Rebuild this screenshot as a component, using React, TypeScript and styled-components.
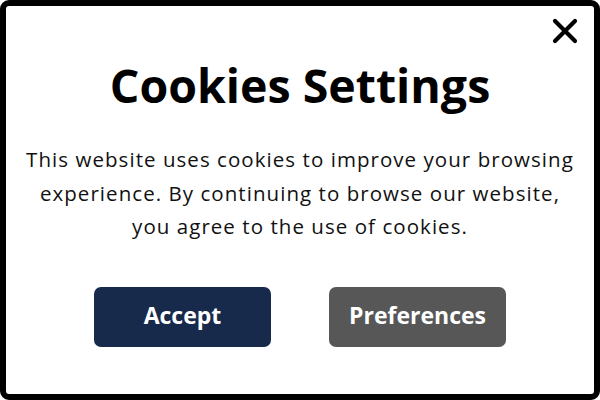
import styled, { createGlobalStyle } from "styled-components";

const GlobalStyle = createGlobalStyle`
  html, body {
    margin: 0;
    padding: 0;
    background: #ffffff;
  }
`;

const CloseIcon = () => (
  <svg width="26" height="26" viewBox="0 0 26 26" aria-hidden="true">
    <path
      d="M3 3 L23 23 M23 3 L3 23"
      stroke="#000"
      strokeWidth="4.2"
      strokeLinecap="round"
    />
  </svg>
);

const App = () => {
  return (
    <>
      <GlobalStyle />
      <Modal>
        <CloseButton aria-label="Close">
          <CloseIcon />
        </CloseButton>
        <Title>Cookies Settings</Title>
        <Message>
          This website uses cookies to improve your browsing
          <br />
          experience. By continuing to browse our website,
          <br />
          you agree to the use of cookies.
        </Message>
        <Actions>
          <Button $variant="primary">Accept</Button>
          <Button $variant="secondary">Preferences</Button>
        </Actions>
      </Modal>
    </>
  );
};

export default App;

const Modal = styled.div`
  position: relative;
  box-sizing: border-box;
  width: 600px;
  height: 400px;
  border: 6px solid #000;
  border-radius: 9px;
  background: #fff;

  display: flex;
  flex-direction: column;
  align-items: center;
  padding-top: 49px;
`;

const CloseButton = styled.button`
  position: absolute;
  top: 12px;
  right: 16px;
  padding: 0;
  border: none;
  background: none;
  display: flex;
  cursor: pointer;
`;

const Title = styled.h1`
  margin: 0;
  font-family: "Open Sans", sans-serif;
  font-weight: 700;
  font-size: 46.5px;
  line-height: 60px;
  color: #000;
`;

const Message = styled.p`
  margin: 28px 0 0;
  font-family: "Open Sans", sans-serif;
  font-size: 20.5px;
  letter-spacing: 1.05px;
  line-height: 33.5px;
  text-align: center;
  color: #111;
`;

const Actions = styled.div`
  margin-top: 43px;
  display: flex;
  gap: 58px;
`;

const Button = styled.button<{ $variant: "primary" | "secondary" }>`
  width: 177px;
  height: 60px;
  padding: 0 0 4px;
  border: none;
  border-radius: 7px;
  background: ${({ $variant }) => ($variant === "primary" ? "#172a4b" : "#575757")};
  color: #fff;
  font-family: "Open Sans", sans-serif;
  font-weight: 700;
  font-size: 23px;
  cursor: pointer;
`;
